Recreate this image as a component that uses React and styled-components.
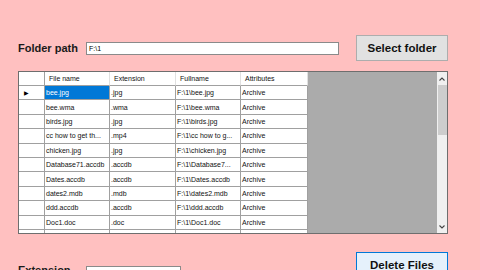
import React from 'react';
import styled, { createGlobalStyle } from 'styled-components';

const GlobalStyle = createGlobalStyle`
  html, body {
    margin: 0;
    padding: 0;
    background: #ffc0c0;
    overflow: hidden;
  }
  body {
    font-family: 'Liberation Sans', Arial, sans-serif;
  }
`;

const Page = styled.div`
  width: 480px;
  height: 270px;
  box-sizing: border-box;
  padding: 35px 32px 0 18px;
  display: flex;
  flex-direction: column;
  overflow: hidden;
`;

const FormRow = styled.div`
  display: flex;
  align-items: ${props => props.align || 'center'};
  height: 26px;
  flex-shrink: 0;
  margin-top: ${props => props.top || 0}px;
`;

const Label = styled.div`
  width: 68px;
  font-size: 11px;
  font-weight: bold;
  color: #1a1a1a;
  padding-top: ${props => props.offset || 0}px;
`;

const TextBox = styled.div`
  width: ${props => props.width}px;
  height: 13px;
  box-sizing: border-box;
  background: #fff;
  border: 1px solid #8a8a8a;
  font-size: 7px;
  line-height: 11px;
  padding-left: 2px;
  color: #000;
  margin-top: ${props => props.offset || 0}px;
`;

const Button = styled.div`
  margin-left: auto;
  width: 92px;
  height: 26px;
  box-sizing: border-box;
  background: ${props => props.focused ? '#e5f1fb' : '#e1e1e1'};
  border: 1px solid ${props => props.focused ? '#0078d7' : '#adadad'};
  display: flex;
  align-items: center;
  justify-content: center;
  font-size: 11.5px;
  font-weight: bold;
  color: #111;
`;

const Grid = styled.div`
  margin-top: 10px;
  width: 430px;
  height: 163px;
  box-sizing: border-box;
  border: 1px solid #6e6e6e;
  background: #ababab;
  display: flex;
  flex-shrink: 0;
  overflow: hidden;
`;

const Table = styled.div`
  display: grid;
  grid-template-columns: 26px 65px 66px 65px 67px;
  grid-auto-rows: 14.4px;
  grid-template-rows: 14px;
  align-content: start;
  background: #fff;
  height: 100%;
  overflow: hidden;
`;

const Filler = styled.div`
  flex: 1;
`;

const Cell = styled.div`
  box-sizing: border-box;
  background: ${props => props.selected ? '#0078d7' : '#fff'};
  color: ${props => props.selected ? '#fff' : '#111'};
  border-right: 1px solid ${props => props.head ? '#e0e0e0' : '#a0a0a0'};
  border-bottom: 1px solid #a0a0a0;
  font-size: 7px;
  padding-left: ${props => props.head ? 4 : 1}px;
  white-space: nowrap;
  overflow: hidden;
  display: flex;
  align-items: center;
`;

const RowHead = styled(Cell)`
  padding-left: 5px;
  border-right: 1px solid #a0a0a0;
`;

const Arrow = styled.span`
  font-size: 6px;
  color: #000;
`;

const ScrollBar = styled.div`
  width: 10px;
  background: #f0f0f0;
  display: flex;
  flex-direction: column;
  align-items: center;
`;

const ScrollButton = styled.div`
  width: 10px;
  height: 13px;
  display: flex;
  align-items: center;
  justify-content: center;
`;

const Thumb = styled.div`
  width: 9px;
  height: 50px;
  background: #cdcdcd;
`;

const Track = styled.div`
  flex: 1;
`;

const files = [
  ['bee.jpg', '.jpg', 'F:\\1\\bee.jpg'],
  ['bee.wma', '.wma', 'F:\\1\\bee.wma'],
  ['birds.jpg', '.jpg', 'F:\\1\\birds.jpg'],
  ['cc how to get th...', '.mp4', 'F:\\1\\cc how to g...'],
  ['chicken.jpg', '.jpg', 'F:\\1\\chicken.jpg'],
  ['Database71.accdb', '.accdb', 'F:\\1\\Database7...'],
  ['Dates.accdb', '.accdb', 'F:\\1\\Dates.accdb'],
  ['dates2.mdb', '.mdb', 'F:\\1\\dates2.mdb'],
  ['ddd.accdb', '.accdb', 'F:\\1\\ddd.accdb'],
  ['Doc1.doc', '.doc', 'F:\\1\\Doc1.doc'],
];

const Chevron = ({ up }) => (
  <svg width="6" height="4" viewBox="0 0 6 4">
    <path d={up ? 'M0.5 3.5 L3 1 L5.5 3.5' : 'M0.5 0.5 L3 3 L5.5 0.5'} fill="none" stroke="#444" strokeWidth="1.1" />
  </svg>
);

export default function App() {
  return (
    <>
      <GlobalStyle />
      <Page>
        <FormRow>
          <Label>Folder path</Label>
          <TextBox width={253}>F:\1</TextBox>
          <Button>Select folder</Button>
        </FormRow>
        <Grid>
          <Table>
            <RowHead head />
            <Cell head>File name</Cell>
            <Cell head>Extension</Cell>
            <Cell head>Fullname</Cell>
            <Cell head>Attributes</Cell>
            {files.map((f, i) => (
              <React.Fragment key={i}>
                <RowHead>{i === 0 && <Arrow>▶</Arrow>}</RowHead>
                <Cell selected={i === 0}>{f[0]}</Cell>
                <Cell>{f[1]}</Cell>
                <Cell>{f[2]}</Cell>
                <Cell>Archive</Cell>
              </React.Fragment>
            ))}
            {/* partly scrolled-in row below the last visible one */}
            <RowHead />
            <Cell />
            <Cell />
            <Cell />
            <Cell />
          </Table>
          <Filler />
          <ScrollBar>
            <ScrollButton><Chevron up /></ScrollButton>
            <Thumb />
            <Track />
            <ScrollButton><Chevron /></ScrollButton>
          </ScrollBar>
        </Grid>
        <FormRow top={18} align="flex-start">
          <Label offset={12}>Extension</Label>
          <TextBox width={95} offset={14} />
          <Button focused>Delete Files</Button>
        </FormRow>
      </Page>
    </>
  );
}
